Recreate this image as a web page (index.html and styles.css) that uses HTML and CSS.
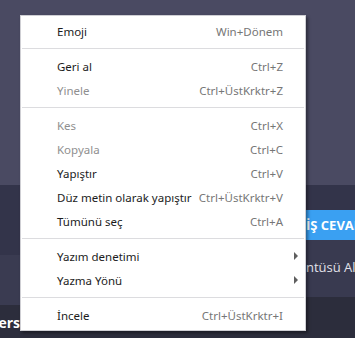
FILE: index.html
```html
<!DOCTYPE html>
<html lang="tr">
<head>
<meta charset="utf-8">
<title>Bağlam menüsü</title>
<link rel="stylesheet" href="styles.css">
</head>
<body>
<div class="page">
  <div class="top"></div>
  <div class="bottom">
    <div class="col-left">
      <div class="band band-a"></div>
      <div class="band band-b"></div>
      <div class="band band-c"><span class="user-name">ners</span></div>
    </div>
    <div class="col-mid"></div>
    <div class="col-right">
      <div class="band band-r1"></div>
      <div class="band band-btn"><span class="btn-text">İŞ CEVAP</span></div>
      <div class="band band-r2"><span class="link-text">ntüsü Al</span></div>
      <div class="band band-r3"></div>
    </div>
  </div>

  <div class="menu">
    <div class="item"><span class="label">Emoji</span><span class="key">Win+Dönem</span></div>
    <div class="sep"></div>
    <div class="item"><span class="label">Geri al</span><span class="key">Ctrl+Z</span></div>
    <div class="item disabled"><span class="label">Yinele</span><span class="key">Ctrl+ÜstKrktr+Z</span></div>
    <div class="sep"></div>
    <div class="item disabled"><span class="label">Kes</span><span class="key">Ctrl+X</span></div>
    <div class="item disabled"><span class="label">Kopyala</span><span class="key">Ctrl+C</span></div>
    <div class="item"><span class="label">Yapıştır</span><span class="key">Ctrl+V</span></div>
    <div class="item"><span class="label">Düz metin olarak yapıştır</span><span class="key">Ctrl+ÜstKrktr+V</span></div>
    <div class="item"><span class="label">Tümünü seç</span><span class="key">Ctrl+A</span></div>
    <div class="sep"></div>
    <div class="item sub"><span class="label">Yazım denetimi</span><span class="arrow"></span></div>
    <div class="item sub"><span class="label">Yazma Yönü</span><span class="arrow"></span></div>
    <div class="sep"></div>
    <div class="item"><span class="label">İncele</span><span class="key">Ctrl+ÜstKrktr+I</span></div>
  </div>
</div>
</body>
</html>
```

FILE: styles.css
```css
* { box-sizing: border-box; }

html, body {
  margin: 0;
  padding: 0;
  background: #2c2d3c;
}

.page {
  position: relative;
  width: 355px;
  height: 338px;
  overflow: hidden;
  display: grid;
  grid-template-rows: 185px 1fr;
  font-family: "Noto Sans", "Open Sans", sans-serif;
}

.top {
  background: #4a4a62;
}

.bottom {
  display: grid;
  grid-template-columns: 20px 1fr 50px;
  background: #2c2d3c;
}

.col-left, .col-right {
  display: flex;
  flex-direction: column;
}

.col-mid {
  background: #2c2d3c;
}

.band-a { height: 70px; background: #33344a; }
.band-b { height: 50px; background: #3a3b51; }
.band-c {
  flex: 1;
  background: #2c2d3c;
  display: flex;
  justify-content: flex-end;
  padding-top: 8px;
  overflow: hidden;
}

.user-name {
  font-family: "Open Sans", "Noto Sans", sans-serif;
  font-weight: 700;
  font-size: 14px;
  line-height: 19px;
  color: #ffffff;
  white-space: nowrap;
}

.band-r1 { height: 25px; background: #33344a; }
.band-btn {
  height: 30px;
  background: #3aa0f2;
  display: flex;
  align-items: center;
  padding-left: 1px;
  overflow: hidden;
}
.btn-text {
  font-family: "Open Sans", "Noto Sans", sans-serif;
  font-weight: 700;
  font-size: 13px;
  color: #ffffff;
  white-space: nowrap;
}
.band-r2 {
  height: 57px;
  background: #393a50;
  display: flex;
  align-items: center;
  padding-left: 1px;
  padding-bottom: 4px;
  overflow: hidden;
}
.link-text {
  font-family: "Open Sans", "Noto Sans", sans-serif;
  font-size: 13px;
  color: #e2e2ea;
  white-space: nowrap;
}
.band-r3 { flex: 1; background: #2c2d3c; }

/* context menu overlay */
.menu {
  position: absolute;
  left: 20px;
  top: 15px;
  width: 286px;
  background: #ffffff;
  border: 1px solid #cfcfd4;
  box-shadow: 2px 2px 3px rgba(0, 0, 0, 0.4);
  padding: 3px 0 3px 0;
  font-family: "Noto Sans", "Open Sans", sans-serif;
  font-size: 11.5px;
}

.item {
  height: 24px;
  display: flex;
  align-items: center;
  justify-content: space-between;
  padding: 0 22px 0 36px;
  color: #1c1c1c;
  white-space: nowrap;
}

.item .key {
  color: #767676;
}

.item.disabled .label {
  color: #8f8f8f;
}

.item.sub {
  padding-right: 7px;
}

.arrow {
  width: 0;
  height: 0;
  border-top: 4px solid transparent;
  border-bottom: 4px solid transparent;
  border-left: 4px solid #5f5f5f;
}

.sep {
  height: 1px;
  margin: 5px 1px;
  background: #dcdcdf;
}
```
